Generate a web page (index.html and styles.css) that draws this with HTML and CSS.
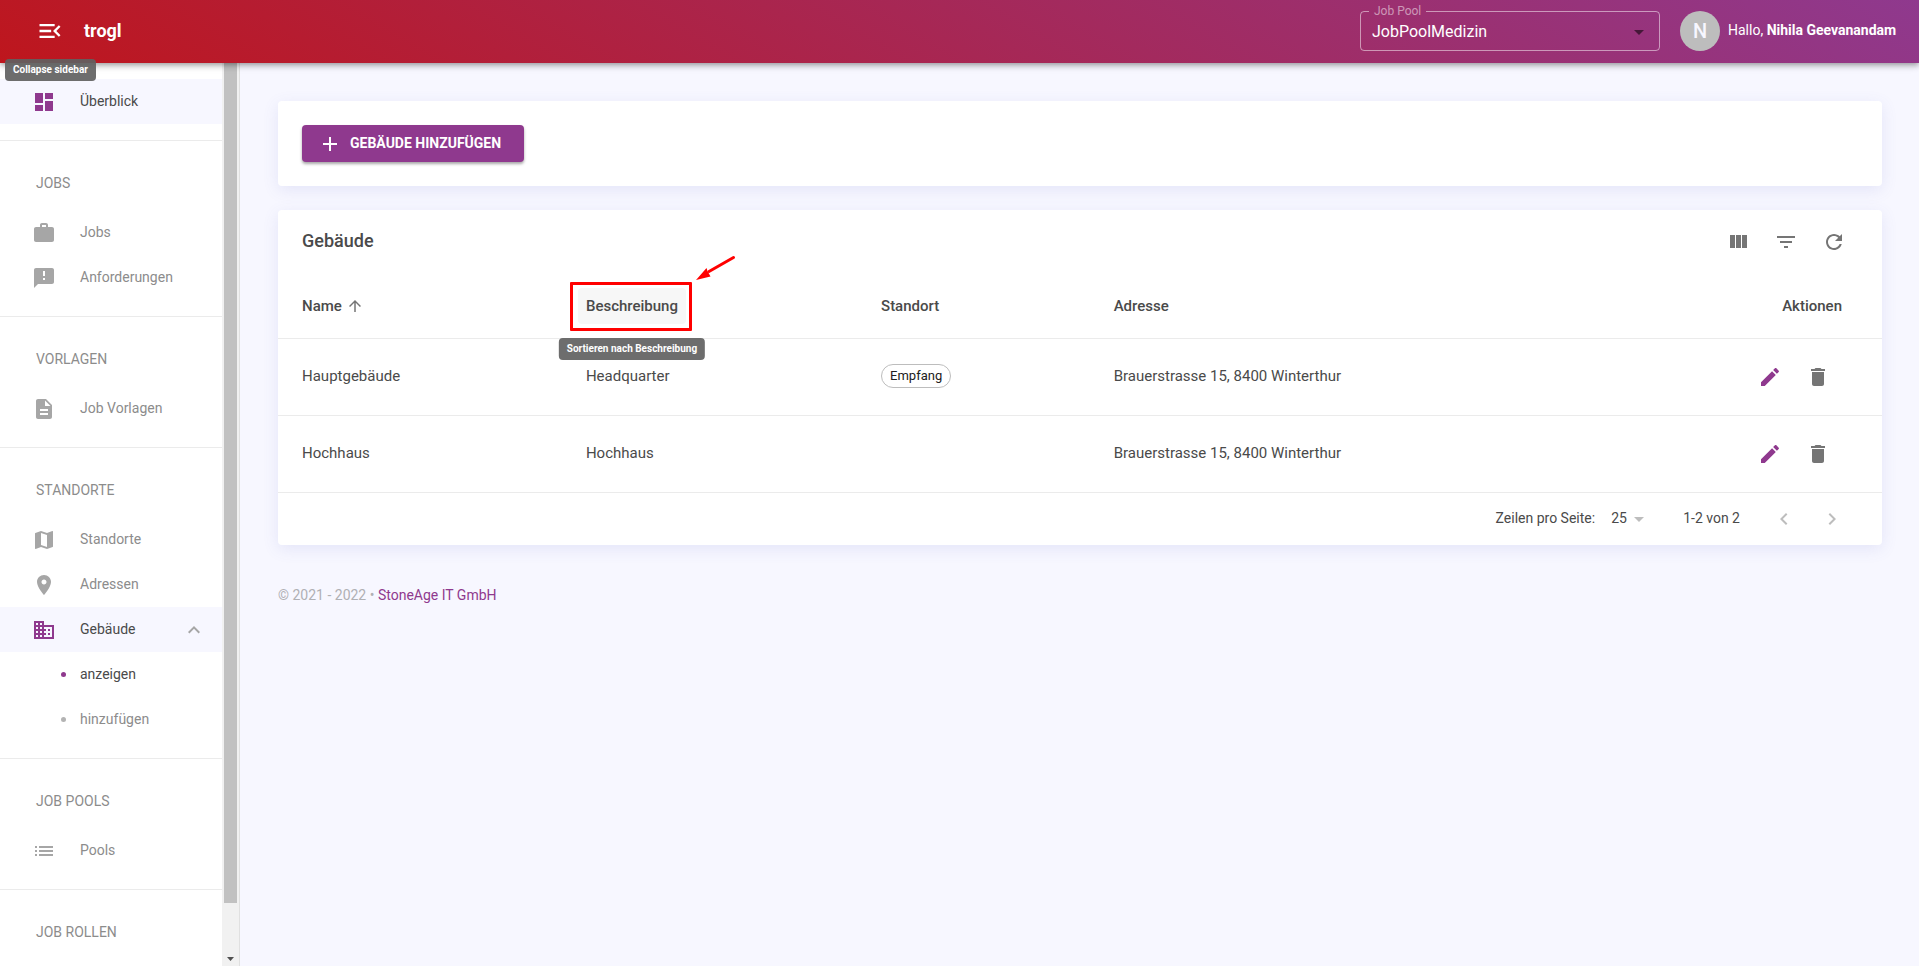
FILE: index.html
```html
<!DOCTYPE html>
<html lang="de">
<head>
<meta charset="utf-8">
<title>trogl – Gebäude</title>
<link rel="stylesheet" href="styles.css">
</head>
<body>
<header class="topbar">
  <div class="brand">
    <button class="icon-btn menu-btn" type="button" aria-label="Collapse sidebar">
      <svg class="icon icon-lg" viewBox="0 0 24 24"><path d="M3 18h13v-2H3v2zm0-5h10v-2H3v2zm0-7v2h13V6H3zm18 9.590L17.420 12 21 8.410 19.590 7l-5 5 5 5L21 15.590z"/></svg>
    </button>
    <span class="tooltip menu-tip" role="tooltip">Collapse sidebar</span>
    <a class="logo" href="#">trogl</a>
  </div>
  <div class="account">
    <fieldset class="pool">
      <legend><label for="pool">Job Pool</label></legend>
      <div class="pool-field">
        <select id="pool"><option>JobPoolMedizin</option></select>
        <svg class="icon caret" viewBox="0 0 24 24"><path d="M7 10l5 5 5-5z"/></svg>
      </div>
    </fieldset>
    <span class="avatar">N</span>
    <span class="hello">Hallo, <strong>Nihila Geevanandam</strong></span>
  </div>
</header>

<div class="shell">
  <aside class="sidebar">
    <nav class="nav">
      <div class="group">
        <a class="item active" href="#"><svg class="icon" viewBox="0 0 24 24"><path d="M3 13h8V3H3v10zm0 8h8v-6H3v6zm10 0h8V11h-8v10zm0-18v6h8V3h-8z"/></svg><span>Überblick</span></a>
      </div>
      <div class="group">
        <h2 class="group-title">JOBS</h2>
        <a class="item" href="#"><svg class="icon" viewBox="0 0 24 24"><path d="M20 6h-4V4c0-1.110-.89-2-2-2h-4c-1.110 0-2 .89-2 2v2H4c-1.110 0-1.990.89-1.990 2L2 19c0 1.110.89 2 2 2h16c1.110 0 2-.89 2-2V8c0-1.110-.89-2-2-2zm-6 0h-4V4h4v2z"/></svg><span>Jobs</span></a>
        <a class="item" href="#"><svg class="icon" viewBox="0 0 24 24"><path d="M20 2H4c-1.100 0-1.990.9-1.990 2L2 22l4-4h14c1.100 0 2-.9 2-2V4c0-1.100-.9-2-2-2zm-7 12h-2v-2h2v2zm0-4h-2V5h2v5z"/></svg><span>Anforderungen</span></a>
      </div>
      <div class="group">
        <h2 class="group-title">VORLAGEN</h2>
        <a class="item" href="#"><svg class="icon" viewBox="0 0 24 24"><path d="M14 2H6c-1.100 0-1.990.9-1.990 2L4 20c0 1.100.89 2 1.990 2H18c1.100 0 2-.9 2-2V8l-6-6zm2 16H8v-2h8v2zm0-4H8v-2h8v2zm-3-5V3.500L18.500 9H13z"/></svg><span>Job Vorlagen</span></a>
      </div>
      <div class="group">
        <h2 class="group-title">STANDORTE</h2>
        <a class="item" href="#"><svg class="icon" viewBox="0 0 24 24"><path d="M20.500 3l-.16.03L15 5.100 9 3 3.360 4.900c-.21.07-.36.25-.36.48V20.500c0 .28.22.5.5.5l.16-.03L9 18.900l6 2.100 5.640-1.900c.21-.07.36-.25.36-.48V3.500c0-.28-.22-.5-.5-.5zM15 19l-6-2.110V5l6 2.110V19z"/></svg><span>Standorte</span></a>
        <a class="item" href="#"><svg class="icon" viewBox="0 0 24 24"><path d="M12 2C8.130 2 5 5.130 5 9c0 5.250 7 13 7 13s7-7.750 7-13c0-3.870-3.130-7-7-7zm0 9.500c-1.380 0-2.500-1.120-2.500-2.500s1.120-2.500 2.500-2.500 2.500 1.120 2.500 2.500-1.120 2.500-2.500 2.500z"/></svg><span>Adressen</span></a>
        <a class="item active" href="#"><svg class="icon" viewBox="0 0 24 24"><path d="M12 7V3H2v18h20V7H12zM6 19H4v-2h2v2zm0-4H4v-2h2v2zm0-4H4V9h2v2zm0-4H4V5h2v2zm4 12H8v-2h2v2zm0-4H8v-2h2v2zm0-4H8V9h2v2zm0-4H8V5h2v2zm10 12h-8v-2h2v-2h-2v-2h2v-2h-2V9h8v10zm-2-8h-2v2h2v-2zm0 4h-2v2h2v-2z"/></svg><span>Gebäude</span><svg class="icon chevron" viewBox="0 0 24 24"><path d="M12 8l-6 6 1.410 1.410L12 10.830l4.590 4.580L18 14z"/></svg></a>
        <a class="item sub current" href="#"><i class="dot"></i><span>anzeigen</span></a>
        <a class="item sub" href="#"><i class="dot"></i><span>hinzufügen</span></a>
      </div>
      <div class="group">
        <h2 class="group-title">JOB POOLS</h2>
        <a class="item" href="#"><svg class="icon" viewBox="0 0 24 24"><path d="M3 13h2v-2H3v2zm0 4h2v-2H3v2zm0-8h2V7H3v2zm4 4h14v-2H7v2zm0 4h14v-2H7v2zM7 7v2h14V7H7z"/></svg><span>Pools</span></a>
      </div>
      <div class="group">
        <h2 class="group-title">JOB ROLLEN</h2>
      </div>
    </nav>
    <div class="scrollbar" aria-hidden="true">
      <div class="thumb"></div>
      <svg class="scroll-down" viewBox="0 0 7 4"><path d="M0 0h7L3.500 4z"/></svg>
    </div>
  </aside>

  <main class="content">
    <section class="card actions">
      <button class="primary" type="button"><svg class="icon" viewBox="0 0 24 24"><path d="M19 13h-6v6h-2v-6H5v-2h6V5h2v6h6v2z"/></svg><span>GEBÄUDE HINZUFÜGEN</span></button>
    </section>

    <section class="card">
      <div class="toolbar">
        <h1 class="title">Gebäude</h1>
        <button class="icon-btn" type="button" aria-label="Spalten"><svg class="icon" viewBox="0 0 24 24"><path d="M10 5h5v13h-5zM4 5h5v13H4zM16 5h5v13h-5z"/></svg></button>
        <button class="icon-btn" type="button" aria-label="Filter"><svg class="icon" viewBox="0 0 24 24"><path d="M10 18h4v-2h-4v2zM3 6v2h18V6H3zm3 7h12v-2H6v2z"/></svg></button>
        <button class="icon-btn" type="button" aria-label="Aktualisieren"><svg class="icon" viewBox="0 0 24 24"><path d="M17.650 6.350C16.200 4.900 14.210 4 12 4c-4.420 0-7.990 3.580-7.990 8s3.570 8 7.990 8c3.730 0 6.840-2.550 7.730-6h-2.080c-.82 2.330-3.040 4-5.650 4-3.310 0-6-2.690-6-6s2.690-6 6-6c1.660 0 3.140.69 4.220 1.780L13 11h7V4l-2.350 2.350z"/></svg></button>
      </div>
      <table class="grid">
        <colgroup><col class="c-name"><col class="c-desc"><col class="c-loc"><col><col class="c-act"></colgroup>
        <thead>
          <tr>
            <th><button class="sort" type="button">Name<svg class="icon icon-sm" viewBox="0 0 24 24"><path d="M4 12l1.410 1.410L11 7.830V20h2V7.830l5.580 5.590L20 12l-8-8-8 8z"/></svg></button></th>
            <th><span class="marked"><button class="sort hovered" type="button">Beschreibung</button><span class="frame"></span><svg class="arrow" viewBox="0 0 40 26"><path d="M37.500 2.500L13 16.500" stroke="#f00" stroke-width="3" stroke-linecap="round"/><path d="M0 25L10.500 13l1 3 3 5.500z" fill="#f00"/></svg><span class="tooltip sort-tip" role="tooltip">Sortieren nach Beschreibung</span></span></th>
            <th>Standort</th>
            <th>Adresse</th>
            <th class="end">Aktionen</th>
          </tr>
        </thead>
        <tbody>
          <tr>
            <td>Hauptgebäude</td><td>Headquarter</td><td><span class="chip">Empfang</span></td><td>Brauerstrasse 15, 8400 Winterthur</td>
            <td class="end"><div class="row-actions"><button class="icon-btn edit" type="button" aria-label="Bearbeiten"><svg class="icon" viewBox="0 0 24 24"><path d="M3 17.250V21h3.750L17.810 9.940l-3.750-3.750L3 17.250zM20.710 7.040c.39-.39.39-1.020 0-1.410l-2.340-2.340c-.39-.39-1.020-.39-1.410 0l-1.830 1.830 3.750 3.750 1.830-1.830z"/></svg></button><button class="icon-btn" type="button" aria-label="Löschen"><svg class="icon" viewBox="0 0 24 24"><path d="M6 19c0 1.100.9 2 2 2h8c1.100 0 2-.9 2-2V7H6v12zM19 4h-3.500l-1-1h-5l-1 1H5v2h14V4z"/></svg></button></div></td>
          </tr>
          <tr>
            <td>Hochhaus</td><td>Hochhaus</td><td></td><td>Brauerstrasse 15, 8400 Winterthur</td>
            <td class="end"><div class="row-actions"><button class="icon-btn edit" type="button" aria-label="Bearbeiten"><svg class="icon" viewBox="0 0 24 24"><path d="M3 17.250V21h3.750L17.810 9.940l-3.750-3.750L3 17.250zM20.710 7.040c.39-.39.39-1.020 0-1.410l-2.340-2.340c-.39-.39-1.020-.39-1.410 0l-1.830 1.830 3.750 3.750 1.830-1.830z"/></svg></button><button class="icon-btn" type="button" aria-label="Löschen"><svg class="icon" viewBox="0 0 24 24"><path d="M6 19c0 1.100.9 2 2 2h8c1.100 0 2-.9 2-2V7H6v12zM19 4h-3.500l-1-1h-5l-1 1H5v2h14V4z"/></svg></button></div></td>
          </tr>
        </tbody>
      </table>
      <div class="pager">
        <label for="rows">Zeilen pro Seite:</label>
        <span class="rows-field"><select id="rows"><option>25</option></select><svg class="icon caret" viewBox="0 0 24 24"><path d="M7 10l5 5 5-5z"/></svg></span>
        <span class="range">1-2 von 2</span>
        <button class="icon-btn" type="button" aria-label="Vorherige Seite" disabled><svg class="icon" viewBox="0 0 24 24"><path d="M15.410 7.410L14 6l-6 6 6 6 1.410-1.410L10.830 12z"/></svg></button>
        <button class="icon-btn" type="button" aria-label="Nächste Seite" disabled><svg class="icon" viewBox="0 0 24 24"><path d="M10 6L8.590 7.410 13.170 12l-4.580 4.590L10 18l6-6z"/></svg></button>
      </div>
    </section>

    <footer class="footer">© 2021 - 2022 • <a href="#">StoneAge IT GmbH</a></footer>
  </main>
</div>
</body>
</html>
```
FILE: styles.css
```css
:root {
  --purple: #8f398e;
  --text: #4a4a4a;
  --muted: #8c8c8c;
  --line: #ebebeb;
  --tint: #f7f7ff;
}

* { box-sizing: border-box; }

body {
  margin: 0;
  height: 100vh;
  display: flex;
  flex-direction: column;
  overflow: hidden;
  background: var(--tint);
  color: var(--text);
  font: 400 14px/20px Roboto, "Liberation Sans", sans-serif;
}

a { color: inherit; text-decoration: none; }
button, select { font: inherit; color: inherit; background: none; border: 0; padding: 0; margin: 0; }
select { appearance: none; outline: 0; }
h1, h2 { margin: 0; font-weight: 400; }

.icon { width: 24px; height: 24px; fill: currentColor; flex: none; display: block; }
.icon-lg { width: 28px; height: 28px; }
.icon-sm { width: 18px; height: 18px; }
.icon-btn { width: 48px; height: 48px; display: grid; place-items: center; color: #757575; flex: none; }
.caret { grid-area: 1 / 1; justify-self: end; pointer-events: none; }

.tooltip {
  position: absolute;
  z-index: 5;
  padding: 4px 8px;
  border-radius: 4px;
  background: rgba(97, 97, 97, 0.92);
  color: #fff;
  font-size: 10px;
  font-weight: 700;
  line-height: 14px;
  white-space: nowrap;
}

/* Top bar */
.topbar {
  position: relative;
  z-index: 2;
  height: 63px;
  flex: none;
  display: flex;
  justify-content: space-between;
  background: linear-gradient(30deg, #be161d, #8f398e);
  box-shadow: 0 2px 4px -1px rgba(0, 0, 0, 0.2), 0 4px 5px rgba(0, 0, 0, 0.14), 0 1px 10px rgba(0, 0, 0, 0.12);
  color: #fff;
}
.brand { position: relative; display: flex; align-items: center; padding: 0 0 2px 26px; gap: 10px; }
.menu-tip { left: 5px; top: 59px; }
.menu-btn { color: #fff; }
.logo { font-size: 18px; font-weight: 700; }
.account { display: flex; align-items: flex-end; padding: 0 19px 12px 0; }
.pool {
  width: 300px;
  height: 46px;
  margin: 0 20px 0 0;
  padding: 0 8px 0 11px;
  border: 1px solid rgba(255, 255, 255, 0.5);
  border-radius: 4px;
}
.pool legend { margin-left: -3px; padding: 0 5px; font-size: 12px; line-height: 12px; color: rgba(255, 255, 255, 0.5); }
.pool legend label { display: block; }
.pool-field { display: grid; align-items: center; height: 30px; }
.pool-field select { grid-area: 1 / 1; font-size: 16px; }
.pool-field .caret { color: rgba(0, 0, 0, 0.54); }
.avatar {
  width: 40px;
  height: 40px;
  border-radius: 50%;
  display: grid;
  place-items: center;
  background: #bdbdbd;
  color: var(--tint);
  font-size: 20px;
  font-weight: 500;
}
.hello { min-width: 172px; margin-left: 8px; line-height: 38px; padding-bottom: 2px; }

/* Sidebar */
.shell { flex: 1; min-height: 0; display: flex; }
.sidebar { width: 240px; flex: none; display: flex; background: #fff; border-right: 1px solid #e0e0e0; }
.nav { flex: 1; min-width: 0; overflow: hidden; }
.group { padding: 16px 0; }
.group + .group { border-top: 1px solid var(--line); }
.group-title { padding-left: 36px; font-size: 14px; line-height: 53px; color: var(--muted); }
.item { height: 45px; display: flex; align-items: center; gap: 24px; padding: 0 16px 0 32px; color: var(--muted); }
.item span { padding-bottom: 2px; }
.item .icon { color: #a6a6a6; }
.item.active { background: var(--tint); color: var(--text); }
.item.active .icon { color: var(--purple); }
.item.active .chevron { margin-left: auto; color: #a6a6a6; }
.item.sub { padding-left: 61px; gap: 14px; }
.dot { width: 5px; height: 5px; border-radius: 50%; background: #b3b3b3; }
.item.current { color: var(--text); }
.item.current .dot { background: var(--purple); }
.scrollbar { width: 17px; background: #f1f1f1; padding: 0 2px; display: flex; flex-direction: column; align-items: center; }
.thumb { flex: 1; align-self: stretch; background: #c1c1c1; margin-bottom: 54px; }
.scroll-down { width: 7px; height: 4px; margin-bottom: 5px; fill: #505050; }

/* Content */
.content { flex: 1; min-width: 0; padding: 38px 37px 0 38px; }
.card { background: #fff; border-radius: 4px; box-shadow: 0 4px 16px rgba(90, 100, 200, 0.12); }
.card + .card { margin-top: 24px; }
.actions { padding: 24px; }
.primary {
  min-width: 222px;
  height: 37px;
  padding: 0 16px;
  display: flex;
  align-items: center;
  gap: 8px;
  border-radius: 4px;
  background: var(--purple);
  color: #fff;
  font-weight: 700;
  box-shadow: 0 2px 3px rgba(0, 0, 0, 0.35);
}
.primary span { padding-bottom: 2px; }
.toolbar { height: 64px; display: flex; align-items: center; padding: 0 24px; }
.title { flex: 1; padding-bottom: 2px; font-size: 18px; font-weight: 500; }

.grid { width: 100%; table-layout: fixed; border-collapse: collapse; font-size: 15px; }
.c-name { width: 18.2%; }
.c-desc { width: 18.4%; }
.c-loc { width: 14.5%; }
.c-act { width: 14%; }
th, td { padding: 0 16px; text-align: left; border-bottom: 1px solid var(--line); }
th { height: 64px; font-weight: 500; }
td { height: 77px; padding-bottom: 2px; }
th:first-child, td:first-child { padding-left: 24px; }
th.end, td.end { text-align: right; padding-right: 40px; padding-bottom: 0; }
.sort { height: 36px; display: inline-flex; align-items: center; gap: 4px; font-weight: 500; }
.sort .icon { color: #757575; }
.marked { position: relative; display: inline-block; margin-left: -8px; }
.hovered { padding: 0 8px; border-radius: 4px; background: #f7f7f7; }
.frame { position: absolute; inset: -6px -6px -7px -8px; border: 3px solid #f00; border-radius: 1px; }
.arrow { position: absolute; left: 118px; top: -33px; width: 40px; height: 26px; fill: none; }
.sort-tip { left: 50%; top: 50px; transform: translateX(-50%); }
.chip {
  display: inline-block;
  padding: 0 8px;
  border: 1px solid #bdbdbd;
  border-radius: 12px;
  color: #212121;
  font-size: 13px;
  line-height: 22px;
}
.row-actions { display: flex; justify-content: flex-end; }
.edit { color: var(--purple); }

.pager { height: 52px; display: flex; align-items: center; justify-content: flex-end; padding-right: 26px; }
.pager label, .range, .rows-field select { padding-bottom: 2px; }
.rows-field { display: grid; align-items: center; width: 40px; margin: 0 32px 0 16px; }
.rows-field select { grid-area: 1 / 1; }
.pager .caret { color: #bdbdbd; }
.range { margin-right: 20px; }
.pager .icon-btn { color: #bdbdbd; }

.footer { padding-top: 40px; color: #b0b0b4; }
.footer a { color: var(--purple); }
```
